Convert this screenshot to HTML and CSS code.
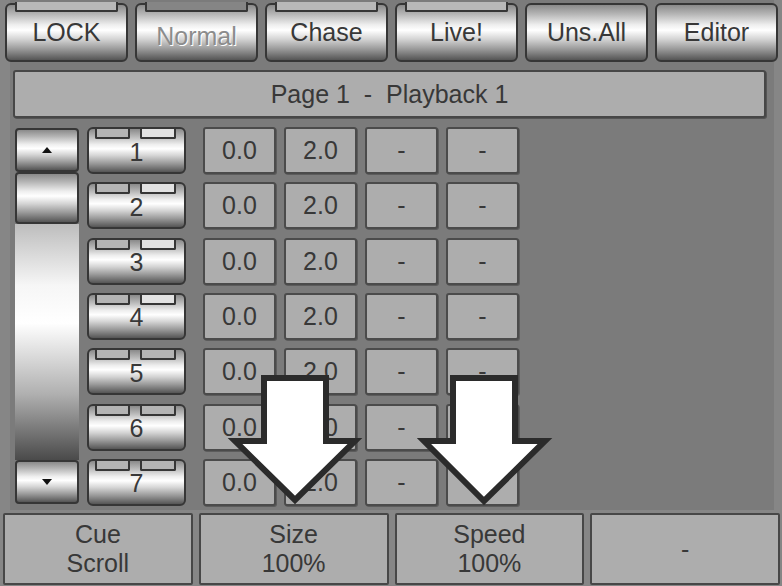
FILE: index.html
```html
<!DOCTYPE html>
<html lang="en">
<head>
    <meta charset="UTF-8">
    <title>Playback 1</title>
    <link rel="stylesheet" href="styles.css">
</head>
<body>
    <div class="screen">
        <div class="main">
            <div class="topbar">
                <div class="key"><span class="key-tab"></span>LOCK</div>
                <div class="key key-off"><span class="key-tab dark"></span>Normal</div>
                <div class="key"><span class="key-tab"></span>Chase</div>
                <div class="key"><span class="key-tab"></span>Live!</div>
                <div class="key">Uns.All</div>
                <div class="key">Editor</div>
            </div>

            <div class="title">Page 1&nbsp;&nbsp;-&nbsp;&nbsp;Playback 1</div>

            <div class="cue-area">
                <div class="scroller">
                    <div class="sbtn chrome">
                        <svg width="10" height="6" viewBox="0 0 10 6"><path d="M0 6 L5 0 L10 6 Z" fill="#111"/></svg>
                    </div>
                    <div class="thumb chrome"></div>
                    <div class="track"></div>
                    <div class="sbtn chrome">
                        <svg width="10" height="6" viewBox="0 0 10 6"><path d="M0 0 L10 0 L5 6 Z" fill="#111"/></svg>
                    </div>
                </div>

                <div class="cue-list" id="cue-list">
                    <!-- rows are filled in by the script below -->
                </div>
            </div>
        </div>

        <div class="bottombar">
            <div class="fkey">Cue<br>Scroll</div>
            <div class="fkey">Size<br>100%</div>
            <div class="fkey">Speed<br>100%</div>
            <div class="fkey">-</div>
        </div>

        <!-- hint arrows drawn over the page -->
        <svg class="arrows" width="782" height="586" viewBox="0 0 782 586">
            <path d="M264 378 H326 V441 H355 L295 500 L235 441 H264 Z" />
            <path d="M453 378 H515 V441 H545 L484 501 L424 441 H453 Z" />
        </svg>
    </div>

    <script>
        // 7 cues, all with the same fade times
        const cues = [1, 2, 3, 4, 5, 6, 7];
        const list = document.getElementById('cue-list');

        cues.forEach(n => {
            const row = document.createElement('div');
            row.className = 'cue-row';
            const lit = n <= 4 ? ' lit' : '';
            row.innerHTML = `
                <div class="num chrome">
                    <span class="num-tab"></span>
                    <span class="num-tab second${lit}"></span>
                    ${n}
                </div>
                <div class="cell first">0.0</div>
                <div class="cell">2.0</div>
                <div class="cell">-</div>
                <div class="cell">-</div>
            `;
            list.appendChild(row);
        });
    </script>
</body>
</html>
```

FILE: styles.css
```css
body {
    margin: 0;
    font-family: 'Liberation Sans', Arial, sans-serif;
    background-color: #868686;
    color: #383838;
}

.screen {
    position: relative;
    width: 782px;
    height: 586px;
    overflow: hidden;
}

.main {
    height: 510px;
    margin: 0 8px 0 10px;
    background-color: #7b7b7b;
}

.chrome {
    background: linear-gradient(to bottom, #8a8a8a 0%, #b4b4b4 16%, #eeeeee 36%, #ffffff 46%, #d4d4d4 62%, #9a9a9a 80%, #555 100%);
}

.topbar {
    display: flex;
    gap: 7px;
    margin: 0 -4px 0 -5px;
    height: 62px;
}

.key {
    position: relative;
    box-sizing: border-box;
    width: 123px;
    height: 59px;
    margin-top: 3px;
    border: 2px solid #363636;
    border-radius: 6px;
    display: flex;
    align-items: center;
    justify-content: center;
    font-size: 25px;
    background: linear-gradient(to bottom, #8a8a8a 0%, #b4b4b4 16%, #eeeeee 36%, #ffffff 46%, #d4d4d4 62%, #9a9a9a 80%, #555 100%);
}

.key-off {
    color: #8c8c8c;
    text-shadow: 1px 1px 0 #fff;
    padding-top: 8px;
}

.key-tab {
    position: absolute;
    top: -3px;
    left: 8px;
    right: 8px;
    height: 8px;
    border: 2px solid #363636;
    border-top: none;
    border-radius: 0 0 2px 2px;
    background-color: #b8b8b8;
}

.key-tab.dark {
    background-color: #858585;
}

.title {
    box-sizing: border-box;
    height: 48px;
    margin: 8px 8px 0 3px;
    border: 2px solid #474747;
    border-radius: 3px;
    box-shadow: 1px 1px 0 #555;
    background-color: #adadad;
    display: flex;
    align-items: center;
    justify-content: center;
    font-size: 25px;
}

.cue-area {
    display: flex;
    margin-top: 9px;
    padding-left: 5px;
}

.scroller {
    display: flex;
    flex-direction: column;
    width: 64px;
    margin-top: 1px;
}

.sbtn {
    box-sizing: border-box;
    height: 44px;
    border: 2px solid #363636;
    border-radius: 4px;
    display: flex;
    align-items: center;
    justify-content: center;
}

.thumb {
    box-sizing: border-box;
    height: 52px;
    border: 2px solid #363636;
    border-radius: 4px;
}

.track {
    height: 236px;
    background: linear-gradient(to bottom, #bdbdbd 0%, #f6f6f6 26%, #ffffff 42%, #b0b0b0 72%, #4a4a4a 100%);
}

.cue-list {
    display: flex;
    flex-direction: column;
    gap: 8.33px;
    margin-left: 8px;
}

.cue-row {
    display: flex;
    height: 47px;
    gap: 8px;
}

.num {
    position: relative;
    box-sizing: border-box;
    width: 99px;
    border: 2px solid #363636;
    border-radius: 6px;
    display: flex;
    align-items: center;
    justify-content: center;
    font-size: 25px;
    padding-top: 3px;
}

.num-tab {
    position: absolute;
    top: 0;
    left: 6px;
    width: 31px;
    height: 8px;
    border: 2px solid #363636;
    border-top: none;
    border-radius: 0 0 2px 2px;
    background-color: #b4b4b4;
}

.num-tab.second {
    left: 51px;
    width: 32px;
}

.num-tab.lit {
    background-color: #e2e2e2;
}

.cell {
    box-sizing: border-box;
    width: 73px;
    border: 2px solid #4b4b4b;
    border-radius: 3px;
    box-shadow: 1px 1px 0 #5c5c5c;
    background-color: #adadad;
    display: flex;
    align-items: center;
    justify-content: center;
    font-size: 25px;
}

.cell.first {
    margin-left: 9px;
}

.bottombar {
    display: flex;
    gap: 6px;
    margin-top: 3px;
    padding: 0 2px 0 3px;
}

.fkey {
    flex: 1;
    box-sizing: border-box;
    height: 72px;
    border: 2px solid #474747;
    border-radius: 2px;
    background-color: #adadad;
    display: flex;
    align-items: center;
    justify-content: center;
    text-align: center;
    font-size: 25px;
    line-height: 29px;
}

.arrows {
    position: absolute;
    left: 0;
    top: 0;
    pointer-events: none;
}

.arrows path {
    fill: #fff;
    stroke: #2b2b2b;
    stroke-width: 6;
    stroke-linejoin: miter;
    stroke-miterlimit: 10;
}
```
